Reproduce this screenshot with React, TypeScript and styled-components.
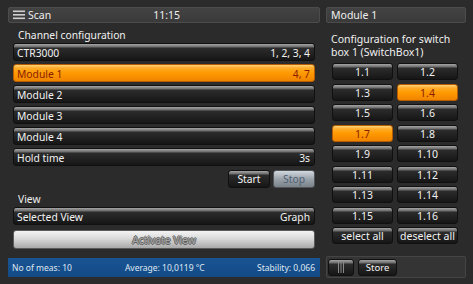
import styled, { createGlobalStyle, css } from "styled-components";

const GlobalStyle = createGlobalStyle`
  html, body {
    margin: 0;
    padding: 0;
    background: #2b2b2b;
  }
  body {
    font-family: "Noto Sans", "Open Sans", "DejaVu Sans", sans-serif;
    color: #eeeeee;
  }
`;

const dark = css`
  background: linear-gradient(
    to bottom,
    #a6a6a6 0px,
    #6a6a6a 3px,
    #2c2c2c 4px,
    #222222 60%,
    #161616 100%
  );
  border: 1px solid #101010;
  color: #f2f2f2;
`;

const orange = css`
  background: linear-gradient(
    to bottom,
    #ffd27a 0px,
    #ffac2a 3px,
    #ff9a00 50%,
    #f08400 100%
  );
  border: 1px solid #b55d00;
  color: #8a1d00;
`;

const Screen = styled.div`
  width: 473px;
  height: 284px;
  box-sizing: border-box;
  padding: 7px 7px 0 8px;
  display: grid;
  grid-template-columns: 312px 140px;
  column-gap: 6px;
  overflow: hidden;
`;

const Column = styled.div`
  display: flex;
  flex-direction: column;
`;

const HeaderBar = styled.div`
  height: 16px;
  box-sizing: border-box;
  display: flex;
  align-items: center;
  padding-left: 4px;
  background: linear-gradient(to bottom, #434343, #3a3a3a);
  border: 1px solid #4c4c4c;
  border-radius: 2px;
  font-size: 10.5px;
`;

const Clock = styled.span`
  margin-left: 102px;
`;

const SectionTitle = styled.div<{ $top: number }>`
  font-size: 10.3px;
  padding: ${(p) => p.$top}px 0 0 10px;
  height: 14px;
  line-height: 14px;
  color: #f0f0f0;
`;

const RowList = styled.div`
  display: flex;
  flex-direction: column;
  gap: 3px;
  padding: 0 5px;
  margin-top: 1px;
`;

const Row = styled.div<{ $active?: boolean }>`
  height: 18px;
  box-sizing: border-box;
  border-radius: 3px;
  display: flex;
  align-items: center;
  justify-content: space-between;
  padding: 1px 4px 0 3px;
  font-size: 10.3px;
  ${(p) => (p.$active ? orange : dark)}
`;

const ActionRow = styled.div`
  display: flex;
  justify-content: flex-end;
  gap: 3px;
  padding: 4px 5px 0 0;
`;

const SmallButton = styled.div<{ $light?: boolean }>`
  width: 42px;
  height: 18px;
  box-sizing: border-box;
  border-radius: 3px;
  display: flex;
  align-items: center;
  justify-content: center;
  font-size: 10.3px;
  ${(p) =>
    p.$light
      ? css`
          background: linear-gradient(to bottom, #d2d8de 0%, #9aa2aa 50%, #7a828a 100%);
          border: 1px solid #505459;
          color: #4f6175;
        `
      : dark}
`;

const ActivateButton = styled.div`
  height: 19px;
  box-sizing: border-box;
  border-radius: 3px;
  margin-top: 2px;
  display: flex;
  align-items: center;
  justify-content: center;
  font-size: 10.3px;
  background: linear-gradient(to bottom, #f4f4f4 0%, #d9d9d9 45%, #a9a9a9 100%);
  border: 1px solid #5a5a5a;
  color: #a8a8a8;
  text-shadow: 0 1px 0 #5e5e5e, 0 -1px 0 #6a6a6a, 1px 0 0 #6a6a6a, -1px 0 0 #6a6a6a;
`;

const StatusBar = styled.div`
  margin-top: 9px;
  height: 19px;
  display: flex;
  align-items: center;
  padding: 0 5px 0 4px;
  background: linear-gradient(to bottom, #1a5493, #134a86);
  font-size: 8.5px;
  color: #dfe8f3;
`;

const StatusItem = styled.span<{ $grow?: number }>`
  flex: ${(p) => p.$grow ?? 0} 0 auto;
`;

const ConfigText = styled.div`
  font-size: 10.5px;
  line-height: 13px;
  padding: 10px 0 0 5px;
  color: #f0f0f0;
`;

const SwitchGrid = styled.div`
  display: grid;
  grid-template-columns: 61px 61px;
  column-gap: 4px;
  row-gap: 3.5px;
  padding: 4px 0 0 6px;
`;

const Cell = styled.div<{ $active?: boolean }>`
  height: 17px;
  box-sizing: border-box;
  border-radius: 3px;
  display: flex;
  align-items: center;
  justify-content: center;
  padding-top: 1px;
  font-size: 10.5px;
  ${(p) => (p.$active ? orange : dark)}
`;

const FooterPanel = styled.div`
  margin-top: auto;
  margin-bottom: 6px;
  height: 22px;
  box-sizing: border-box;
  display: flex;
  align-items: center;
  gap: 4px;
  padding-left: 1px;
  background: #343434;
  border: 1px solid #444444;
  border-radius: 2px;
`;

const FooterButton = styled.div<{ $width: number }>`
  width: ${(p) => p.$width}px;
  height: 17px;
  box-sizing: border-box;
  border-radius: 3px;
  display: flex;
  align-items: center;
  justify-content: center;
  font-size: 9.5px;
  ${dark}
`;

const MenuIcon = () => (
  <svg width="12" height="10" viewBox="0 0 12 10" style={{ marginRight: 3 }}>
    <rect x="0" y="0.5" width="12" height="1.6" fill="#cfcfcf" />
    <rect x="0" y="4" width="12" height="1.6" fill="#cfcfcf" />
    <rect x="0" y="7.5" width="12" height="1.6" fill="#cfcfcf" />
  </svg>
);

const BarsIcon = () => (
  <svg width="10" height="12" viewBox="0 0 10 12">
    <rect x="2" y="0" width="1" height="12" fill="#8a8a8a" />
    <rect x="4.5" y="0" width="1" height="12" fill="#8a8a8a" />
    <rect x="7" y="0" width="1" height="12" fill="#8a8a8a" />
  </svg>
);

const channels = [
  { name: "CTR3000", value: "1, 2, 3, 4" },
  { name: "Module 1", value: "4, 7", active: true },
  { name: "Module 2", value: "" },
  { name: "Module 3", value: "" },
  { name: "Module 4", value: "" },
  { name: "Hold time", value: "3s" },
];

const switches = Array.from({ length: 16 }, (_, i) => `1.${i + 1}`);
const activeSwitches = ["1.4", "1.7"];

export default function App() {
  return (
    <>
      <GlobalStyle />
      <Screen>
        <Column>
          <HeaderBar>
            <MenuIcon />
            <span>Scan</span>
            <Clock>11:15</Clock>
          </HeaderBar>
          <SectionTitle $top={5}>Channel configuration</SectionTitle>
          <RowList>
            {channels.map((c) => (
              <Row key={c.name} $active={c.active}>
                <span>{c.name}</span>
                <span>{c.value}</span>
              </Row>
            ))}
          </RowList>
          <ActionRow>
            <SmallButton>Start</SmallButton>
            <SmallButton $light>Stop</SmallButton>
          </ActionRow>
          <SectionTitle $top={4}>View</SectionTitle>
          <RowList>
            <Row>
              <span>Selected View</span>
              <span>Graph</span>
            </Row>
            <ActivateButton>Activate View</ActivateButton>
          </RowList>
          <StatusBar>
            <StatusItem $grow={0}>No of meas: 10</StatusItem>
            <StatusItem style={{ marginLeft: 53 }}>Average: 10,0119 °C</StatusItem>
            <StatusItem $grow={1} style={{ textAlign: "right" }}>
              Stability: 0,066
            </StatusItem>
          </StatusBar>
        </Column>
        <Column>
          <HeaderBar>Module 1</HeaderBar>
          <ConfigText>
            <div>Configuration for switch</div>
            <div>box 1 (SwitchBox1)</div>
          </ConfigText>
          <SwitchGrid>
            {switches.map((s) => (
              <Cell key={s} $active={activeSwitches.includes(s)}>
                {s}
              </Cell>
            ))}
            <Cell>select all</Cell>
            <Cell>deselect all</Cell>
          </SwitchGrid>
          <FooterPanel>
            <FooterButton $width={26}>
              <BarsIcon />
            </FooterButton>
            <FooterButton $width={39}>Store</FooterButton>
          </FooterPanel>
        </Column>
      </Screen>
    </>
  );
}
